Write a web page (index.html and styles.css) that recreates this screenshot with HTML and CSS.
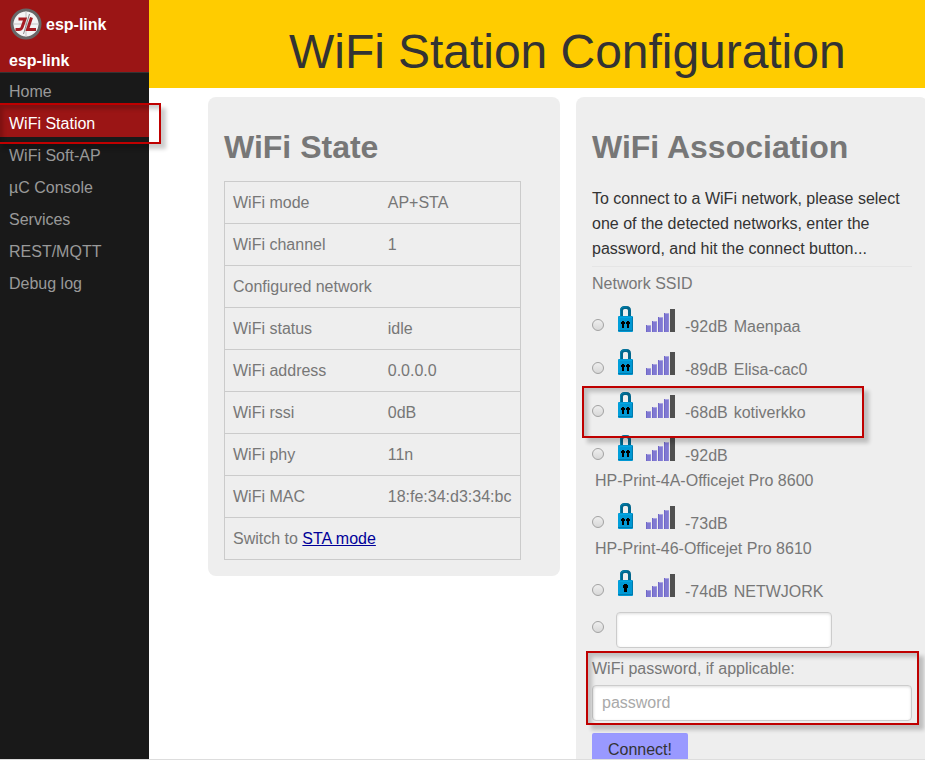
FILE: index.html
```html
<!DOCTYPE html>
<html lang="en">
<head>
<meta charset="utf-8">
<title>esp-link</title>
<link rel="stylesheet" href="styles.css">
</head>
<body>
<svg class="defs" width="0" height="0">
  <defs>
    <g id="shackle">
      <path d="M3.500 11V4.500Q3.500 1.500 6.500 1.500H8.500Q11.500 1.500 11.500 4.500V11" fill="none" stroke="#00668c" stroke-width="3"/>
      <path d="M2.500 10V4.500Q2.500 1 6 1H9" fill="none" stroke="#0083b0" stroke-width="1"/>
      <rect x="0" y="10" width="15" height="16" rx="1" fill="#0098d4"/>
      <path d="M1 11.500H14M1 11V25" stroke="#00a6e2" stroke-width="1"/>
      <path d="M0 24.500H15M14.500 11V25" stroke="#007bad" stroke-width="1"/>
    </g>
    <symbol id="lock2" viewBox="0 0 15 26">
      <use href="#shackle"/>
      <path d="M4 15h2v1h1v2H6v4H4v-4H3v-2h1zM9 15h2v1h1v2h-1v4H9v-4H8v-2h1z" fill="#000"/>
    </symbol>
    <symbol id="lock1" viewBox="0 0 15 26">
      <use href="#shackle"/>
      <path d="M6 14h3v1h1v3H9v4H6v-4H5v-3h1z" fill="#000"/>
    </symbol>
    <symbol id="signal" viewBox="0 0 29 23">
      <path d="M0 16h5v7H0zM6 12h5v11H6zM12 8h5v15h-5zM18 4h5v19h-5z" fill="#8079d2"/>
      <path d="M0 16.500h5M6 12.500h5M12 8.500h5M18 4.500h5" stroke="#aaa5e0"/>
      <path d="M4.500 17v6M10.500 13v10M16.500 9v14M22.500 5v18" stroke="#8f88da"/>
      <path d="M.5 16v7M6.500 12v11M12.500 8v15M18.500 4v19" stroke="#7067c8"/>
      <path d="M24 0h5v23h-5z" fill="#505050"/>
    </symbol>
  </defs>
</svg>
<div class="app">
  <nav class="sidebar">
    <div class="brand">
      <div class="brand-row">
        <svg class="logo" viewBox="0 0 32 32">
          <circle cx="16" cy="16" r="14" fill="#f4f4f4" stroke="#686868" stroke-width="3"/>
          <path d="M3 16H29M16 3V29" stroke="#c4c4c4" stroke-width="1"/>
          <path d="M8.500 11H15L12 19.500Q11.200 21.500 9 21.500H5.500M21.500 9.500L17.500 21.500H26" fill="none" stroke="#a51c22" stroke-width="3"/>
          <path d="M19.500 6L13.500 26" stroke="#888" stroke-width="1"/>
        </svg>
        <span>esp-link</span>
      </div>
      <div class="device">esp-link</div>
    </div>
    <ul class="menu">
      <li>Home</li>
      <li class="active">WiFi Station<div class="callout callout-menu"></div></li>
      <li>WiFi Soft-AP</li>
      <li>µC Console</li>
      <li>Services</li>
      <li>REST/MQTT</li>
      <li>Debug log</li>
    </ul>
  </nav>
  <main class="main">
    <header class="header"><h1>WiFi Station Configuration</h1></header>
    <div class="content">
      <section class="card state">
        <h2>WiFi State</h2>
        <table>
          <tr><td class="key">WiFi mode</td><td>AP+STA</td></tr>
          <tr><td>WiFi channel</td><td>1</td></tr>
          <tr><td>Configured network</td><td></td></tr>
          <tr><td>WiFi status</td><td>idle</td></tr>
          <tr><td>WiFi address</td><td>0.0.0.0</td></tr>
          <tr><td>WiFi rssi</td><td>0dB</td></tr>
          <tr><td>WiFi phy</td><td>11n</td></tr>
          <tr><td>WiFi MAC</td><td>18:fe:34:d3:34:bc</td></tr>
          <tr><td colspan="2">Switch to <a href="#">STA mode</a></td></tr>
        </table>
      </section>
      <section class="card assoc">
        <h2>WiFi Association</h2>
        <p>To connect to a WiFi network, please select one of the detected networks, enter the password, and hit the connect button...</p>
        <div class="legend">Network SSID</div>
        <div class="net"><i class="radio"></i><svg class="lock"><use href="#lock2"/></svg><svg class="signal"><use href="#signal"/></svg><span class="db">-92dB</span><span class="ssid">Maenpaa</span></div>
        <div class="net"><i class="radio"></i><svg class="lock"><use href="#lock2"/></svg><svg class="signal"><use href="#signal"/></svg><span class="db">-89dB</span><span class="ssid">Elisa-cac0</span></div>
        <div class="net"><i class="radio"></i><svg class="lock"><use href="#lock2"/></svg><svg class="signal"><use href="#signal"/></svg><span class="db">-68dB</span><span class="ssid">kotiverkko</span><div class="callout callout-net"></div></div>
        <div class="net"><i class="radio"></i><svg class="lock"><use href="#lock2"/></svg><svg class="signal"><use href="#signal"/></svg><span class="db">-92dB</span></div>
        <div class="long">HP-Print-4A-Officejet Pro 8600</div>
        <div class="net"><i class="radio"></i><svg class="lock"><use href="#lock2"/></svg><svg class="signal"><use href="#signal"/></svg><span class="db">-73dB</span></div>
        <div class="long">HP-Print-46-Officejet Pro 8610</div>
        <div class="net"><i class="radio"></i><svg class="lock last"><use href="#lock1"/></svg><svg class="signal"><use href="#signal"/></svg><span class="db">-74dB</span><span class="ssid">NETWJORK</span></div>
        <div class="custom"><i class="radio"></i><input class="other" type="text"></div>
        <div class="pass">
          <label>WiFi password, if applicable:</label>
          <input type="text" placeholder="password">
          <div class="callout callout-pass"></div>
        </div>
        <button>Connect!</button>
      </section>
    </div>
  </main>
</div>
<div class="edge"></div>
</body>
</html>
```
FILE: styles.css
```css
* { box-sizing: border-box; }
html, body { height: 760px; overflow: hidden; }
body { margin: 0; font: 16px/25px "Liberation Sans", Arial, sans-serif; color: #777; background: #fff; }
.defs { position: absolute; }
.app { display: flex; height: 759px; overflow: hidden; }
.edge { height: 1px; background: #ddd; }
.sidebar { width: 149px; flex: none; background: #191919; position: relative; z-index: 2; }
.brand { height: 73px; background: #9b1515; border-bottom: 1px solid #333; color: #fff; padding: 8px 0 0 10px; font-weight: 700; }
.brand-row { display: flex; align-items: center; height: 32px; gap: 4px; }
.logo { width: 32px; height: 32px; }
.device { margin-top: 8px; margin-left: -1px; }
.menu { list-style: none; margin: 0; padding: 0; }
.menu li { height: 32px; line-height: 32px; padding: 3px 0 0 9px; color: #999; position: relative; }
.menu .active { background: #9b1515; color: #fff; }
.main { flex: none; width: 838px; }
.header { height: 88px; background: #fc0; }
h1 { margin: 0; font-size: 48px; font-weight: 400; line-height: 56px; letter-spacing: -.04px; color: #333; padding: 24px 0 0 140px; }
.content { display: flex; align-items: flex-start; gap: 16px; padding: 9px 0 0 59px; }
.card { width: 352px; background: #eee; border-radius: 8px; padding: 0 16px; flex: none; }
.state { height: 479px; }
.assoc { height: 700px; }
h2 { margin: 0; padding-top: 30px; font-size: 32px; line-height: 40px; height: 84px; }
table { border-collapse: collapse; width: 297px; border: 1px solid #cbcbcb; }
td { border-bottom: 1px solid #cbcbcb; height: 42px; padding: 0 8px; white-space: nowrap; }
.key { width: 155px; }
a { color: #009; }
p { margin: 5px 0 0; color: #333; height: 81px; border-bottom: 1px solid #e5e5e5; }
.legend { height: 37px; padding-top: 4px; }
.net { display: flex; height: 43px; position: relative; }
.radio { width: 12px; height: 12px; margin-top: 15px; border: 1px solid #a2a2a2; border-radius: 50%; background: linear-gradient(#eee, #d8d8d8); flex: none; }
.lock { width: 15px; height: 26px; margin: 2px 0 0 14px; }
.lock.last { margin-top: 1px; }
.signal { width: 29px; height: 23px; margin: 5px 0 0 13px; }
.db { margin: 10px 0 0 10px; }
.ssid { margin: 10px 0 0 6px; }
.long { height: 25px; line-height: 25px; margin-top: -8px; margin-bottom: 8px; padding-left: 3px; }
.custom { display: flex; height: 44px; }
.custom .radio { margin-top: 9px; }
input { display: block; height: 36px; width: 320px; border: 1px solid #ccc; border-radius: 4px; box-shadow: inset 0 1px 3px #ddd; padding: 0 9px; font: inherit; background: #fff; }
input::placeholder { color: #a9a9a9; }
.other { width: 216px; margin-left: 12px; }
.pass { position: relative; height: 77px; }
label { display: block; height: 29px; }
button { display: block; border: 0; border-radius: 2px; width: 96px; height: 34px; background: #99f; color: #333; font: inherit; padding: 0 0 2px; }
.callout { position: absolute; border: 2px solid #bf0000; box-shadow: 5px 5px 4px rgba(0,0,0,.2), inset 4px 4px 4px rgba(0,0,0,.2); pointer-events: none; z-index: 3; }
.callout-menu { left: -3px; top: -2px; width: 164px; height: 41px; }
.callout-net { left: -10px; top: -4px; width: 282px; height: 52px; }
.callout-pass { left: -6px; top: -5px; width: 333px; height: 74px; }
```
